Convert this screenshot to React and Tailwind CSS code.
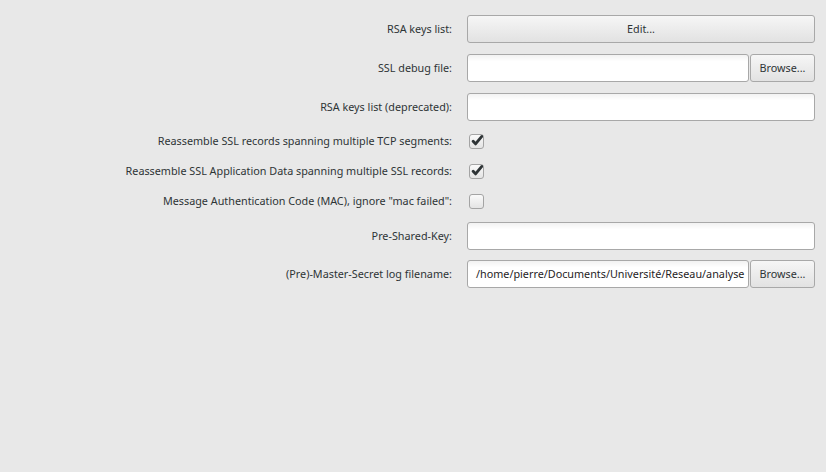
const CheckIcon = () => (
  <svg className="w-[13px] h-[13px] -mt-[2px] ml-[1px]" viewBox="0 0 10 10" fill="none" stroke="#2e3436" strokeWidth={2.4} strokeLinecap="round" strokeLinejoin="round">
    <path d="M1.8 5.6l2 2.2L9 1.6" />
  </svg>
);

const Label = ({ children }) => (
  <div className="w-[452px] shrink-0 text-right whitespace-nowrap">{children}</div>
);

const Button = ({ children, className = "" }) => (
  <div className={`h-[28px] shrink-0 flex items-center justify-center rounded-[3px] border border-[#a8a8a8] bg-gradient-to-b from-[#f6f6f6] to-[#e2e2e2] ${className}`}>
    {children}
  </div>
);

const Field = ({ value, className = "" }) => (
  <div className={`h-[28px] min-w-0 flex items-center px-[8px] rounded-[3px] border border-[#a8a8a8] bg-gradient-to-b from-[#f2f2f2] to-white to-[25%] overflow-hidden whitespace-nowrap text-[#1f2325] ${className}`}>
    {value}
  </div>
);

const Check = ({ checked }) => (
  <div className="ml-[2px] w-[15px] h-[15px] flex items-center justify-center rounded-[3px] border border-[#a4a4a4] bg-gradient-to-b from-[#fafafa] to-[#e4e4e4]">
    {checked && <CheckIcon />}
  </div>
);

const Row = ({ label, children, className = "" }) => (
  <div className={`flex items-center gap-[15px] ${className}`}>
    <Label>{label}</Label>
    <div className="flex-1 min-w-0 flex">{children}</div>
  </div>
);

export default function App() {
  return (
    <div className="w-[826px] h-[472px] bg-[#e8e8e8] text-[#2e3436] text-[10.8px] pt-[15px] pr-[11px]" style={{ fontFamily: '"Noto Sans", "Open Sans", sans-serif' }}>
      <Row label="RSA keys list:" className="h-[28px]">
        <Button className="flex-1">Edit...</Button>
      </Row>
      <Row label="SSL debug file:" className="h-[28px] mt-[11px]">
        <Field className="flex-1" />
        <Button className="w-[65px] ml-[1px]">Browse...</Button>
      </Row>
      <Row label="RSA keys list (deprecated):" className="h-[28px] mt-[11px]">
        <Field className="flex-1" />
      </Row>
      <Row label="Reassemble SSL records spanning multiple TCP segments:" className="h-[30px] mt-[5px]">
        <Check checked />
      </Row>
      <Row label="Reassemble SSL Application Data spanning multiple SSL records:" className="h-[30px]">
        <Check checked />
      </Row>
      <Row label={'Message Authentication Code (MAC), ignore "mac failed":'} className="h-[30px]">
        <Check />
      </Row>
      <Row label="Pre-Shared-Key:" className="h-[28px] mt-[6px]">
        <Field className="flex-1" />
      </Row>
      <Row label="(Pre)-Master-Secret log filename:" className="h-[28px] mt-[10px]">
        <Field className="flex-1" value="/home/pierre/Documents/Université/Reseau/analyse" />
        <Button className="w-[65px] ml-[1px]">Browse...</Button>
      </Row>
    </div>
  );
}
